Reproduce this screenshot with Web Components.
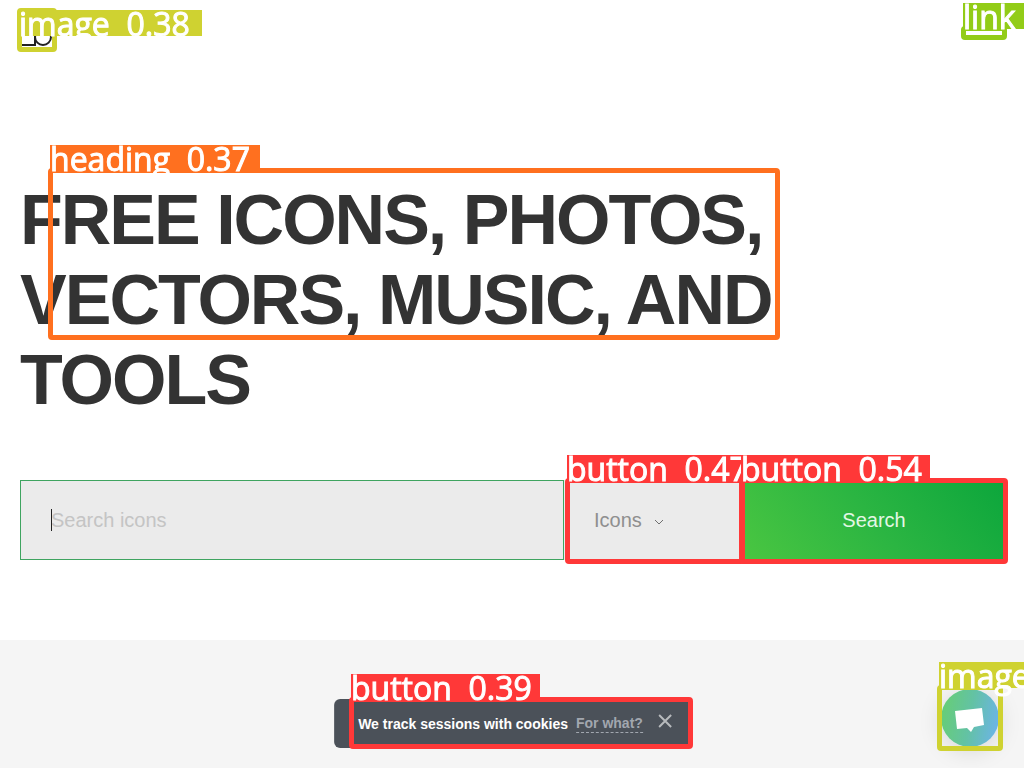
<!DOCTYPE html>
<html lang="en">
<head>
<meta charset="utf-8">
<title>Free icons, photos, vectors, music, and tools</title>
<style>
html, body { margin: 0; min-height: 100%; }
body { font-family: "Liberation Sans", Arial, sans-serif; color: #333; background: #fff; }
</style>
</head>
<body>
<home-page></home-page>
<script>
const define = (name, html) => customElements.define(name, class extends HTMLElement {
  constructor() {
    super();
    this.attachShadow({ mode: "open" }).innerHTML = html;
  }
});

define("site-header", `
<style>
:host { display: flex; align-items: center; height: 60px; padding: 0 20px; }
a { display: block; }
svg { display: block; }
</style>
<a href="#home" aria-label="Home"><svg width="34" height="34" viewBox="0 0 34 34" fill="none" stroke="#222" stroke-width="2">
<path d="M3 14h12v18H2"/><circle cx="23" cy="24" r="8"/></svg></a>`);

define("search-bar", `
<style>
:host { display: block; }
form { display: flex; height: 80px; margin: 0; }
.field { position: relative; flex: 1; min-width: 0; display: flex; }
.field::after { content: ""; position: absolute; left: 31px; top: 29px; width: 1px; height: 22px; background: #222; }
input { box-sizing: border-box; width: 100%; margin: 0; padding: 0 30px; border: 1px solid #3fa460; border-radius: 0;
  background: #ebebeb; font: 20px "Liberation Sans", Arial, sans-serif; color: #333; outline: none; caret-color: transparent; }
input::placeholder { color: #c4c4c4; opacity: 1; }
.kind { position: relative; flex: 0 0 180px; display: flex; background: #ebebeb; }
select { appearance: none; width: 100%; margin: 0; padding: 0 30px; border: 0; border-radius: 0; background: transparent;
  font: 20px "Liberation Sans", Arial, sans-serif; color: #8f8f8f; }
.kind svg { position: absolute; left: 90px; top: 38px; pointer-events: none; }
button { flex: 0 0 260px; margin: 0; padding: 0; border: 0; color: #e3f7e5;
  background: linear-gradient(50deg, #4ac641, #2bb542 50%, #0ca63c);
  font: 20px "Liberation Sans", Arial, sans-serif; }
</style>
<form>
<div class="field"><input type="text" aria-label="Search icons" placeholder="Search icons"></div>
<div class="kind"><select aria-label="Type"><option>Icons</option></select>
<svg width="10" height="10" viewBox="0 0 10 10" fill="none" stroke="#707070"><path d="M1 2l4 4 4-4"/></svg></div>
<button type="button">Search</button>
</form>`);

define("hero-section", `
<style>
:host { display: block; padding: 120px 20px 80px; }
h1 { margin: 0 0 60px; max-width: 800px; font-size: 70px; line-height: 80px; font-weight: 700; letter-spacing: -2px; color: #333; }
</style>
<h1><slot></slot></h1>
<search-bar></search-bar>`);

define("cookie-notice", `
<style>
:host { position: fixed; left: 50%; bottom: 20px; transform: translateX(-50%); display: flex; align-items: center;
  box-sizing: border-box; height: 49px; padding: 0 18px 0 24px; border-radius: 6px; background: #4b5159;
  font-size: 14px; line-height: 18px; font-weight: 700; color: #fff; white-space: nowrap; }
a { margin-left: 8px; color: #a2a7af; text-decoration: none; border-bottom: 1px dashed #a2a7af; }
button { display: block; margin: 0 0 6px 15px; padding: 0; border: 0; background: none; }
svg { display: block; }
</style>
<span>We track sessions with cookies</span>
<a href="#cookies">For what?</a>
<button type="button" aria-label="Close"><svg width="14" height="14" viewBox="0 0 14 14" stroke="#b7babd" stroke-width="2"><path d="M1 1l12 12M13 1L1 13"/></svg></button>`);

define("chat-launcher", `
<style>
:host { position: fixed; right: 25px; bottom: 21px; display: block; }
button { display: grid; place-items: center; width: 58px; height: 58px; margin: 0; padding: 0; border: 0; border-radius: 50%;
  background: linear-gradient(100deg, #67cf70, #63c2a4 50%, #6db2f0); box-shadow: 0 4px 24px #0002; }
</style>
<button type="button" aria-label="Open chat"><svg width="32" height="28" viewBox="0 0 32 28"><path d="M1 7L28 4L30 21L20 23L17 28L13 24L3 25Z" fill="#fff"/></svg></button>`);

define("detection-box", `
<style>
:host { position: absolute; box-sizing: border-box; border: 5px solid var(--tone); border-radius: 4px; }
span { position: absolute; left: -3px; top: var(--label-top, -28px); box-sizing: border-box; width: var(--label); height: 26px;
  background: var(--tone); color: #fff; white-space: pre; font: 500 32px/28px "Open Sans", sans-serif; -webkit-text-stroke: 1px #fff; }
</style>
<span><slot></slot></span>`);

define("detection-layer", `
<style>
:host { position: fixed; inset: 0; overflow: hidden; pointer-events: none; }
.olive { --tone: #cfd231; } .lime { --tone: #92cc17; } .orange { --tone: #ff701f; } .red { --tone: #ff3838; }
.logo { left: 17px; top: 8px; width: 40px; height: 44px; --label: 183px; --label-top: -3px; }
.nav { right: 17px; top: 26px; width: 46px; height: 14px; --label: 61px; }
.title { left: 48px; top: 168px; width: 732px; height: 172px; --label: 210px; }
.kind { left: 565px; top: 478px; width: 180px; height: 86px; --label: 189px; }
.go { left: 739px; top: 478px; width: 269px; height: 86px; --label: 189px; }
.cookie { left: 349px; top: 697px; width: 344px; height: 52px; --label: 189px; }
.chat { left: 937px; top: 685px; width: 66px; height: 66px; --label: 85px; }
</style>
<detection-box class="olive logo">image  0.38</detection-box>
<detection-box class="lime nav">link</detection-box>
<detection-box class="orange title">heading  0.37</detection-box>
<detection-box class="red kind">button  0.47</detection-box>
<detection-box class="red go">button  0.54</detection-box>
<detection-box class="red cookie">button  0.39</detection-box>
<detection-box class="olive chat">image</detection-box>`);

define("home-page", `
<style>
:host { display: flex; flex-direction: column; min-height: 100vh; }
.more { flex: 1; min-height: 128px; background: #f5f5f5; }
</style>
<site-header></site-header>
<main><hero-section>FREE ICONS, PHOTOS, VECTORS, MUSIC, AND TOOLS</hero-section></main>
<section class="more"></section>
<cookie-notice></cookie-notice>
<chat-launcher></chat-launcher>
<detection-layer></detection-layer>`);
</script>
</body>
</html>
